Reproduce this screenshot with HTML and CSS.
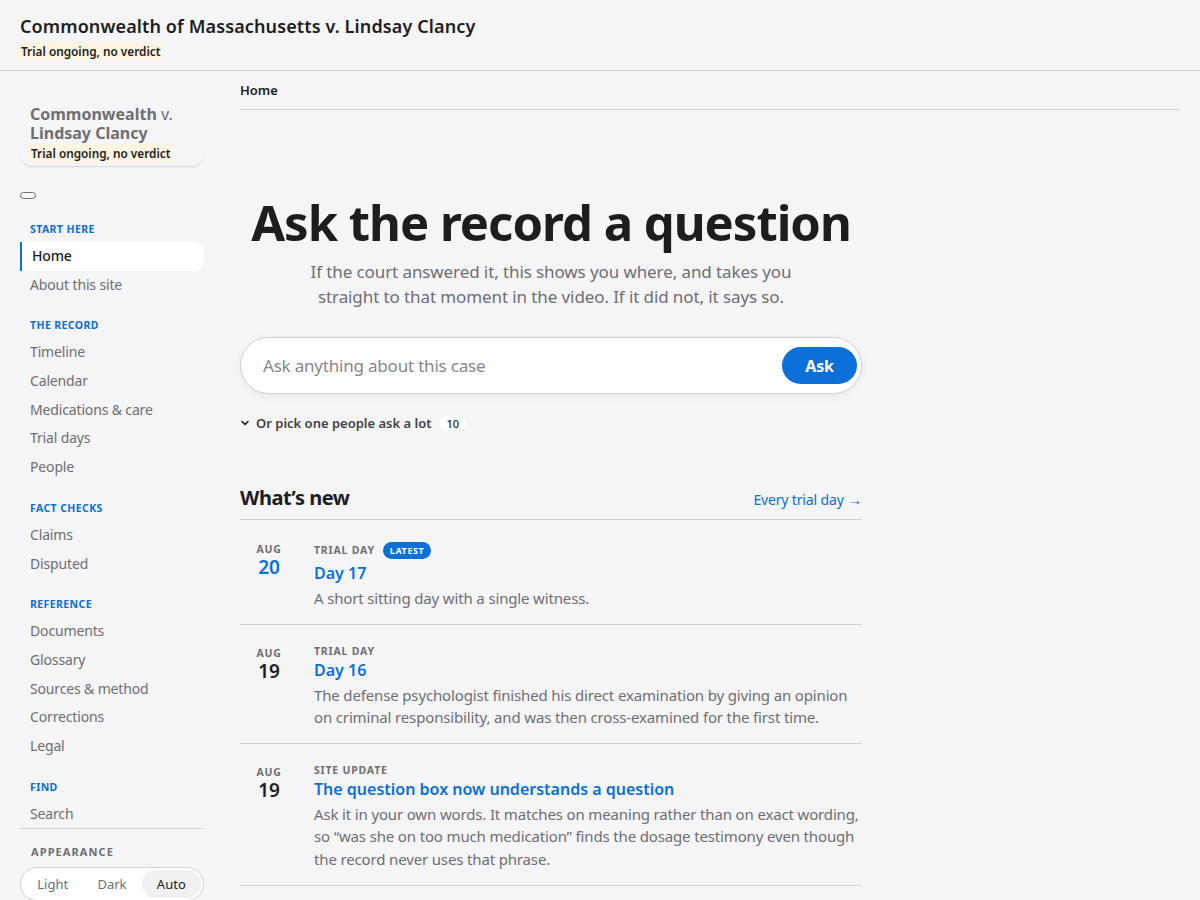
FILE: index.html
```html
<!DOCTYPE html>
<html lang="en">
<head>
<meta charset="utf-8">
<title>Commonwealth of Massachusetts v. Lindsay Clancy</title>
<link rel="stylesheet" href="styles.css">
</head>
<body>
<header class="topbar">
  <div class="topbar-title">Commonwealth of Massachusetts v. Lindsay Clancy</div>
  <span class="status">Trial ongoing, no verdict</span>
</header>
<div class="layout">
  <aside class="sidebar">
    <div class="case-card">
      <div class="case-name"><b>Commonwealth</b> v.</div>
      <div class="case-name"><b>Lindsay Clancy</b></div>
      <span class="status">Trial ongoing, no verdict</span>
    </div>
    <button class="mini-toggle" aria-label="Toggle"></button>
    <nav class="nav">
      <div class="nav-group">
        <div class="nav-label">Start here</div>
        <a class="nav-item active">Home</a>
        <a class="nav-item">About this site</a>
      </div>
      <div class="nav-group">
        <div class="nav-label">The record</div>
        <a class="nav-item">Timeline</a>
        <a class="nav-item">Calendar</a>
        <a class="nav-item">Medications &amp; care</a>
        <a class="nav-item">Trial days</a>
        <a class="nav-item">People</a>
      </div>
      <div class="nav-group">
        <div class="nav-label">Fact checks</div>
        <a class="nav-item">Claims</a>
        <a class="nav-item">Disputed</a>
      </div>
      <div class="nav-group">
        <div class="nav-label">Reference</div>
        <a class="nav-item">Documents</a>
        <a class="nav-item">Glossary</a>
        <a class="nav-item">Sources &amp; method</a>
        <a class="nav-item">Corrections</a>
        <a class="nav-item">Legal</a>
      </div>
      <div class="nav-group">
        <div class="nav-label">Find</div>
        <a class="nav-item">Search</a>
      </div>
    </nav>
    <div class="appearance">
      <div class="appearance-label">Appearance</div>
      <div class="segmented">
        <span class="seg">Light</span>
        <span class="seg">Dark</span>
        <span class="seg on">Auto</span>
      </div>
    </div>
  </aside>
  <main class="main">
    <div class="crumbs">Home</div>
    <div class="content">
      <section class="hero">
        <h1>Ask the record a question</h1>
        <p class="lede">If the court answered it, this shows you where, and takes you straight to that moment in the video. If it did not, it says so.</p>
        <form class="ask">
          <input class="ask-input" type="text" placeholder="Ask anything about this case">
          <button class="ask-btn" type="button">Ask</button>
        </form>
        <div class="picks">
          <svg class="chev" width="10" height="10" viewBox="0 0 10 10"><path d="M2 3.5 L5 6.5 L8 3.5" fill="none" stroke="currentColor" stroke-width="1.6" stroke-linecap="round" stroke-linejoin="round"/></svg>
          <span>Or pick one people ask a lot</span>
          <span class="count">10</span>
        </div>
      </section>
      <section class="news">
        <div class="news-head">
          <h2>What’s new</h2>
          <a class="all-link">Every trial day <span class="arrow">→</span></a>
        </div>
        <article class="entry">
          <div class="date latest"><span class="mon">Aug</span><span class="day">20</span></div>
          <div class="entry-body">
            <div class="kind">Trial day <span class="badge">Latest</span></div>
            <a class="entry-title">Day 17</a>
            <p class="entry-text">A short sitting day with a single witness.</p>
          </div>
        </article>
        <article class="entry">
          <div class="date"><span class="mon">Aug</span><span class="day">19</span></div>
          <div class="entry-body">
            <div class="kind">Trial day</div>
            <a class="entry-title">Day 16</a>
            <p class="entry-text">The defense psychologist finished his direct examination by giving an opinion on criminal responsibility, and was then cross-examined for the first time.</p>
          </div>
        </article>
        <article class="entry">
          <div class="date"><span class="mon">Aug</span><span class="day">19</span></div>
          <div class="entry-body">
            <div class="kind">Site update</div>
            <a class="entry-title">The question box now understands a question</a>
            <p class="entry-text">Ask it in your own words. It matches on meaning rather than on exact wording, so “was she on too much medication” finds the dosage testimony even though the record never uses that phrase.</p>
          </div>
        </article>
      </section>
    </div>
  </main>
</div>
</body>
</html>
```

FILE: styles.css
```css
* { box-sizing: border-box; }
html, body { margin: 0; padding: 0; }
body {
  background: #f5f5f7;
  color: #1d1d1f;
  font-family: "Noto Sans", "Open Sans", sans-serif;
  font-size: 14px;
  overflow: hidden;
  height: 900px;
}
a { color: inherit; text-decoration: none; }

.topbar {
  height: 71px;
  padding: 14px 20px 0;
  border-bottom: 1px solid #d2d2d7;
}
.topbar-title {
  font-size: 18px;
  font-weight: 600;
  line-height: 24px;
  letter-spacing: 0.12px;
  color: #1d1d1f;
}
.status {
  display: inline-block;
  margin: 4px 0 0 -2px;
  padding: 0 3px;
  background: #fdf5e1;
  border-radius: 3px;
  font-size: 11.8px;
  font-weight: 600;
  line-height: 18px;
  color: #1d1d1f;
}

.layout {
  display: flex;
  gap: 36px;
  padding: 0 20px;
}

.sidebar {
  width: 184px;
  flex: none;
  padding-top: 32px;
}
.case-card {
  padding: 2px 10px 4px;
  border-radius: 0 0 12px 12px;
  box-shadow: 0 1px 1px rgba(0,0,0,0.12);
}
.case-name {
  font-size: 16px;
  line-height: 19px;
  height: 19px;
  color: #6e6e73;
  font-weight: 400;
  white-space: nowrap;
}
.case-name b { font-weight: 700; }
.case-card .status { margin: 1px 0 0 -2px; }

.mini-toggle {
  display: block;
  margin: 26px 0 0;
  width: 16px;
  height: 7px;
  padding: 0;
  border: 1px solid #6e6e73;
  border-radius: 4px;
  background: #f5f5f7;
}

.nav { margin-top: 22px; }
.nav-group { margin-bottom: 18px; display: flex; flex-direction: column; }
.nav-group:last-child { margin-bottom: 0; }
.nav-label {
  padding: 0 10px;
  font-size: 10.5px;
  font-weight: 700;
  letter-spacing: 0.4px;
  text-transform: uppercase;
  color: #0a6fd6;
  line-height: 16px;
  margin-bottom: 5px;
}
.nav-item {
  display: block;
  padding: 0 10px;
  height: 28.7px;
  line-height: 28.7px;
  font-size: 14px;
  letter-spacing: -0.15px;
  color: #6e6e73;
  border-radius: 8px;
}
.nav-item.active {
  background: #fff;
  color: #1d1d1f;
  border-left: 2px solid #0a6fd6;
  border-radius: 0 10px 10px 0;
  padding-left: 10px;
  font-weight: 500;
}

.appearance {
  border-top: 1px solid #d2d2d7;
  padding-top: 15px;
}
.appearance-label {
  padding: 0 11px;
  font-size: 11px;
  font-weight: 700;
  letter-spacing: 1.1px;
  text-transform: uppercase;
  color: #6e6e73;
  line-height: 16px;
}
.segmented {
  display: flex;
  margin-top: 7px;
  padding: 2px;
  border: 1px solid #d2d2d7;
  border-radius: 999px;
  background: #fff;
  height: 34px;
}
.seg {
  flex: 1;
  text-align: center;
  line-height: 28px;
  font-size: 13px;
  color: #6e6e73;
  border-radius: 999px;
}
.seg.on { background: #f0f0f2; color: #1d1d1f; }

.main { flex: 1; min-width: 0; }
.crumbs {
  padding-top: 10px;
  height: 39px;
  font-size: 13px;
  font-weight: 600;
  line-height: 18px;
  color: #1d1d1f;
  border-bottom: 1px solid #d2d2d7;
}
.content { width: 622px; }

.hero { padding-top: 82px; text-align: center; }
.hero h1 {
  margin: 0;
  font-size: 49px;
  font-weight: 700;
  line-height: 60px;
  letter-spacing: -1px;
  color: #1d1d1f;
  white-space: nowrap;
}
.lede {
  margin: 6.5px auto 0;
  width: 500px;
  font-size: 17px;
  line-height: 25px;
  letter-spacing: -0.1px;
  color: #6e6e73;
}
.ask {
  display: flex;
  align-items: center;
  margin-top: 28.5px;
  height: 57px;
  padding: 0 4px 0 22px;
  background: #fff;
  border: 1px solid #d2d2d7;
  border-radius: 999px;
  box-shadow: 0 2px 8px rgba(0,0,0,0.06);
}
.ask-input {
  flex: 1;
  border: 0;
  outline: 0;
  background: transparent;
  font-family: inherit;
  font-size: 17px;
  letter-spacing: -0.2px;
  color: #1d1d1f;
  padding: 0;
}
.ask-input::placeholder { color: #86868b; }
.ask-btn {
  width: 75px;
  height: 37px;
  border: 0;
  border-radius: 999px;
  background: #0a6fd6;
  color: #fff;
  font-family: inherit;
  font-size: 16px;
  font-weight: 700;
  letter-spacing: -0.2px;
}
.picks {
  display: flex;
  align-items: center;
  gap: 6px;
  margin-top: 20px;
  height: 18px;
  font-size: 13px;
  font-weight: 600;
  color: #424245;
  text-align: left;
}
.chev { color: #1d1d1f; }
.count {
  margin-left: 2px;
  padding: 0 7px;
  background: #fff;
  border-radius: 999px;
  font-size: 11px;
  font-weight: 500;
  line-height: 15px;
  color: #1d1d1f;
}

.news { margin-top: 52px; }
.news-head {
  display: flex;
  align-items: baseline;
  justify-content: space-between;
  padding-bottom: 7px;
  border-bottom: 1px solid #d2d2d7;
}
.news-head h2 {
  margin: 0;
  font-size: 20px;
  font-weight: 700;
  line-height: 28px;
  letter-spacing: -0.45px;
}
.all-link { color: #0a6fd6; font-size: 14px; letter-spacing: -0.15px; }
.arrow { font-size: 15px; }

.entry {
  display: flex;
  gap: 32px;
  padding: 19px 0 14px 16px;
  border-bottom: 1px solid #d2d2d7;
}
.entry:first-of-type { padding-bottom: 14.5px; }
.entry:last-of-type { padding-bottom: 15px; }
.date {
  width: 26px;
  flex: none;
  display: flex;
  flex-direction: column;
  align-items: center;
  padding-top: 2.5px;
}
.mon {
  font-size: 10.5px;
  font-weight: 700;
  letter-spacing: 0.8px;
  text-transform: uppercase;
  color: #6e6e73;
  line-height: 14px;
}
.day {
  font-size: 19px;
  font-weight: 600;
  line-height: 22px;
  color: #1d1d1f;
}
.date.latest .day { color: #0a6fd6; }
.entry-body { flex: 1; }
.kind {
  display: flex;
  align-items: center;
  gap: 8px;
  height: 15px;
  font-size: 10.5px;
  font-weight: 700;
  letter-spacing: 0.8px;
  text-transform: uppercase;
  color: #6e6e73;
  line-height: 15px;
}
.kind:has(.badge) { height: 22.5px; }
.badge {
  padding: 0 7px;
  background: #0a6fd6;
  color: #fff;
  border-radius: 999px;
  font-size: 9px;
  letter-spacing: 0.6px;
  line-height: 17px;
}
.entry-title {
  display: block;
  margin-top: -1px;
  font-size: 16px;
  font-weight: 600;
  line-height: 24px;
  color: #0a6fd6;
}
.entry-text {
  margin: 2px 0 0;
  font-size: 15px;
  line-height: 22.5px;
  letter-spacing: -0.15px;
  color: #6e6e73;
}
```
